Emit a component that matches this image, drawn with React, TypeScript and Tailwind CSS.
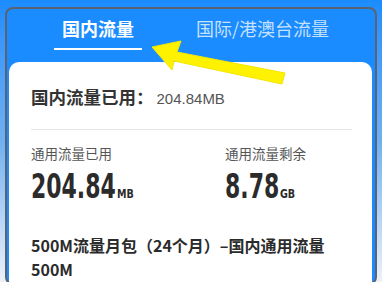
import React from "react";

const cjk = { fontFamily: '"Noto Sans CJK SC", "Noto Sans", sans-serif' };
const num = {
  fontFamily: '"DejaVu Sans Condensed", "Liberation Sans", sans-serif',
};

function Arrow() {
  return (
    <svg
      className="pointer-events-none absolute left-0 top-0"
      width={382}
      height={282}
      viewBox="0 0 382 282"
    >
      <polygon
        points="152,47 181,41 177,52 285,73 282,84 174,61 172,70"
        fill="#fff200"
        stroke="#f5e600"
        strokeWidth={1}
        strokeLinejoin="round"
      />
    </svg>
  );
}

function BigNumber({ value, unit, width }: { value: string; unit: string; width: number }) {
  return (
    <div className="mt-[10px] flex items-baseline text-[#2b2b2b]" style={num}>
      <span className="inline-block overflow-visible whitespace-nowrap" style={{ width }}>
        <span className="inline-block origin-left scale-x-[0.74] text-[33px] font-bold leading-[28px]">
          {value}
        </span>
      </span>
      <span className="ml-[1px] inline-block origin-left scale-x-[0.85] text-[12.5px] font-bold leading-[12px]">
        {unit}
      </span>
    </div>
  );
}

export default function App() {
  return (
    <div
      className="relative h-[282px] w-[382px] overflow-hidden bg-gradient-to-b from-[#1a8cff] via-[#6fb0f2] to-[#eef1f6] pl-[5px] pt-[7px]"
      style={cjk}
    >
      <div className="flex h-[278px] w-[372px] flex-col overflow-hidden rounded-[8px] border-2 border-[#5b6371] bg-[#1a8cff]">
        <div className="flex h-[53px] shrink-0 items-start pt-[6px]">
          <div className="ml-[47px] flex w-[88px] flex-col items-center">
            <span className="text-[18px] font-bold leading-[26px] text-white">国内流量</span>
            <span className="mt-[7px] h-[2px] w-[88px] bg-white" />
          </div>
          <span className="ml-[54px] text-[18px] leading-[26px] text-white/75">国际/港澳台流量</span>
        </div>
        <div className="ml-[2px] mr-[3px] flex flex-1 flex-col rounded-t-[10px] bg-white pl-[22px] pr-[20px]">
          <div className="mt-[23px] flex items-baseline">
            <span className="text-[17.5px] font-bold leading-[24px] text-[#333]">国内流量已用：</span>
            <span
              className="ml-[3px] text-[15px] leading-[24px] text-[#555]"
              style={{ fontFamily: '"Liberation Sans", Arial, sans-serif' }}
            >
              204.84MB
            </span>
          </div>
          <div className="mt-[18px] h-px w-full bg-[#e6e6e6]" />
          <div className="mt-[13px] flex">
            <div className="flex w-[194px] flex-col">
              <span className="text-[13.5px] leading-[20px] text-[#555]">通用流量已用</span>
              <BigNumber value="204.84" unit="MB" width={85} />
            </div>
            <div className="flex flex-col">
              <span className="text-[13.5px] leading-[20px] text-[#555]">通用流量剩余</span>
              <BigNumber value="8.78" unit="GB" width={54} />
            </div>
          </div>
          <div className="mt-[28px] text-[16px] font-bold leading-[24px] text-[#2b2b2b]">
            <div>500M流量月包（24个月）–国内通用流量</div>
            <div>500M</div>
          </div>
        </div>
      </div>
      <Arrow />
    </div>
  );
}
